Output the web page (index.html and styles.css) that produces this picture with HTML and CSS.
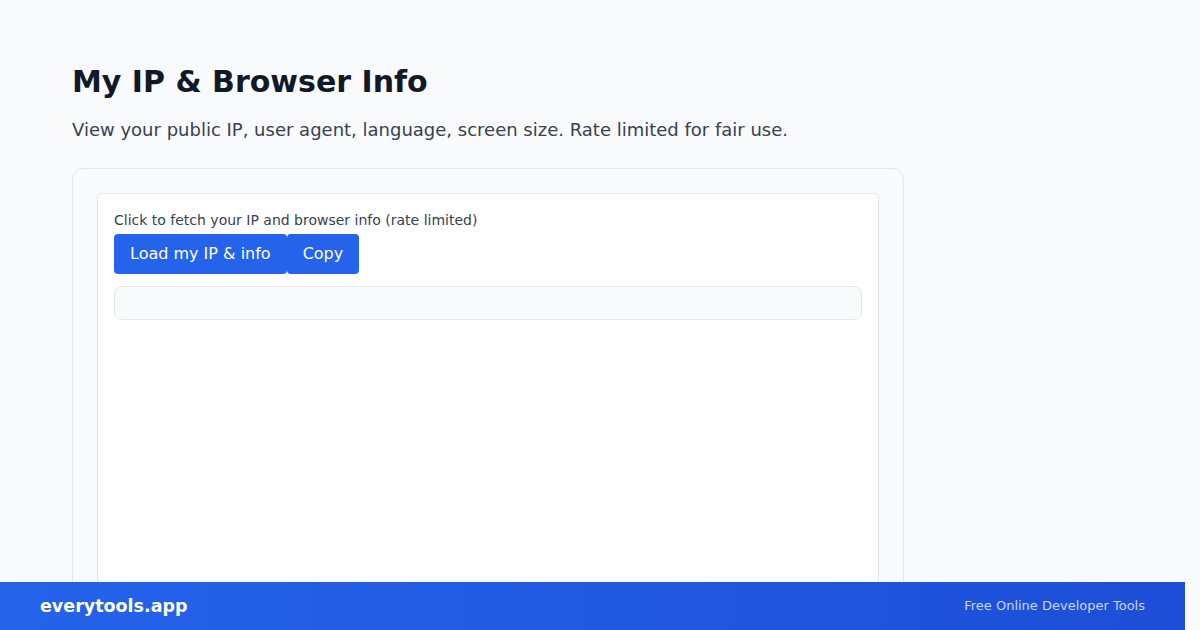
FILE: index.html
```html
<!DOCTYPE html>
<html lang="en">

<head>
    <meta charset="UTF-8">
    <meta name="viewport" content="width=device-width, initial-scale=1">
    <title>My IP &amp; Browser Info</title>
    <link rel="stylesheet" href="styles.css">
</head>

<body>
    <main class="page">
        <h1>My IP &amp; Browser Info</h1>
        <p class="lead">View your public IP, user agent, language, screen size. Rate limited for fair use.</p>

        <section class="tool-card">
            <div class="tool-panel">
                <label class="hint">Click to fetch your IP and browser info (rate limited)</label>
                <div class="actions">
                    <button type="button">Load my IP &amp; info</button>
                    <button type="button">Copy</button>
                </div>
                <pre class="output" id="output"></pre>
            </div>
        </section>
    </main>

    <footer class="site-footer">
        <span class="brand">everytools.app</span>
        <span class="tagline">Free Online Developer Tools</span>
    </footer>
</body>

</html>
```

FILE: styles.css
```css
body {
    font-family: "DejaVu Sans", Verdana, sans-serif;
    background: #f8fafc;
    color: #111827;
    margin: 0;
    padding: 0;
    overflow: hidden;
}

.page {
    padding: 63px 72px 0;
    width: 832px;
}

h1 {
    font-size: 30px;
    line-height: 38px;
    margin: 0 0 15px;
    color: #111827;
}

.lead {
    font-size: 18px;
    line-height: 28px;
    color: #374151;
    margin: 0 0 24px;
}

.tool-card {
    border: 1px solid #e5e7eb;
    border-radius: 12px;
    padding: 24px;
    background: #f8fafc;
}

.tool-panel {
    background: white;
    border: 1px solid #e5e7eb;
    border-radius: 6px;
    padding: 16px 16px 0;
    min-height: 420px;
}

.hint {
    display: block;
    font-size: 14px;
    line-height: 20px;
    color: #374151;
    margin-bottom: 4px;
}

.actions {
    display: flex;
    margin-bottom: 12px;
}

button {
    font-family: inherit;
    font-size: 16px;
    height: 40px;
    padding: 0 16px 1px;
    background: #2563eb;
    color: white;
    border: none;
    border-radius: 4px;
    cursor: pointer;
}

.output {
    margin: 0;
    height: 32px;
    background: #f9fafb;
    border: 1px solid #e5e7eb;
    border-radius: 8px;
}

.site-footer {
    position: fixed;
    left: 0;
    right: 15px;
    bottom: 0;
    height: 48px;
    padding: 0 40px;
    display: flex;
    align-items: center;
    justify-content: space-between;
    background: linear-gradient(90deg, #2563eb, #1d4ed8);
    color: white;
}

.brand {
    font-size: 17.5px;
    font-weight: bold;
}

.tagline {
    font-size: 13px;
    color: #c7d6fb;
    padding-bottom: 2px;
}
```
